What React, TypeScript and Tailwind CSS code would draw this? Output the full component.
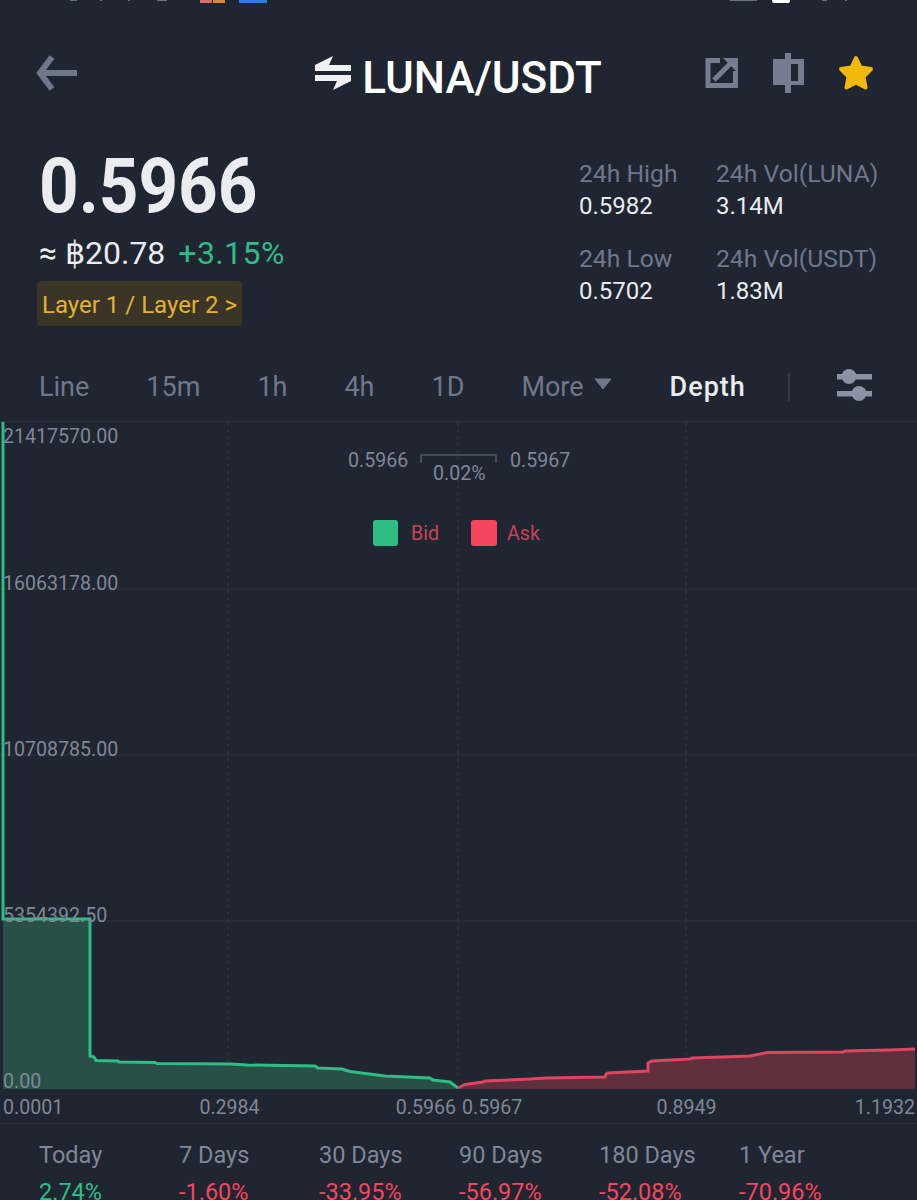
/**
 * LUNA/USDT market screen, depth tab open.
 */

const TABS = ['Line', '15m', '1h', '4h', '1D']

const STATS = [
  { label: '24h High', value: '0.5982' },
  { label: '24h Vol(LUNA)', value: '3.14M' },
  { label: '24h Low', value: '0.5702' },
  { label: '24h Vol(USDT)', value: '1.83M' },
]

const PERIODS = [
  { label: 'Today', value: '2.74%', up: true },
  { label: '7 Days', value: '-1.60%', up: false },
  { label: '30 Days', value: '-33.95%', up: false },
  { label: '90 Days', value: '-56.97%', up: false },
  { label: '180 Days', value: '-52.08%', up: false },
  { label: '1 Year', value: '-70.96%', up: false },
]

const Y_LABELS = [
  { text: '21417570.00', className: 'top-[3px]' },
  { text: '16063178.00', className: 'top-[150px]' },
  { text: '10708785.00', className: 'top-[316px]' },
  { text: '5354392.50', className: 'top-[482px]' },
  { text: '0.00', className: 'top-[648px]' },
]

// curve points, in the plot's own coordinates (y = 0 is the top of the plot)
const BID_LINE =
  '3,0 3,497 90,497 90,634 94,635 96,638.5 118,639 119,640 155,640.5 157,641.5 230,642 247,643 315,644 318,646 342,647 350,649.5 385,654 430,656 433,658 450,660 458,666'
const ASK_LINE =
  '458,666 465,662.5 483,660 485,659 530,657 545,656 605,655 606,652 608,651 648,649 648,641 652,639 690,637 692,636 750,634 765,631 767,630.5 843,630 845,629 890,628 915,627'

function HeaderIcons() {
  return (
    <div className="flex items-center justify-end gap-[34px] pr-[43px]">
      <svg width="34" height="32" viewBox="0 0 34 32" className="fill-none">
        <path d="M15 3.5H3V28.5H30.5V14" stroke="#757e8f" strokeWidth="5" />
        <path d="M9 23L26 6" stroke="#757e8f" strokeWidth="5" />
        <path d="M18 1H33V16Z" fill="#757e8f" />
      </svg>
      <svg width="31" height="40" viewBox="0 0 31 40">
        <path
          fillRule="evenodd"
          d="M12 0H18V6H31V32H18V40H12V32H0V6H12ZM18 11V28H25V11Z"
          fill="#757e8f"
        />
      </svg>
      <svg width="36" height="36" viewBox="0 0 36 36">
        <polygon
          points="18,3 22.5,12.5 33,14 25.5,21.5 27.5,32.5 18,27.5 8.5,32.5 10.5,21.5 3,14 13.5,12.5"
          fill="#f0b90b"
          stroke="#f0b90b"
          strokeWidth="4"
          strokeLinejoin="round"
        />
      </svg>
    </div>
  )
}

function DepthChart() {
  return (
    <div className="flex h-[702px] flex-col border-b border-[#2b313c]">
      <div className="relative h-[667px] text-[19.6px] text-[#7f8896]">
        <svg width="917" height="667" className="absolute inset-0">
          {[167, 333, 499].map((y) => (
            <line key={y} x1="0" x2="917" y1={y} y2={y} stroke="#2d333f" />
          ))}
          {[228, 458, 686].map((x) => (
            <line
              key={x}
              x1={x}
              x2={x}
              y1="0"
              y2="667"
              stroke="#323946"
              strokeDasharray="3 4"
            />
          ))}
          <polygon points={`3,497 ${BID_LINE.split(' ').slice(2).join(' ')} 458,667 3,667`} fill="#275147" />
          <polygon points={`${ASK_LINE} 915,667 458,667`} fill="#5f2f3e" />
          <polyline points={BID_LINE} fill="none" stroke="#2ebd85" strokeWidth="3" />
          <polyline points={ASK_LINE} fill="none" stroke="#e0455f" strokeWidth="3" />
        </svg>

        {Y_LABELS.map((l) => (
          <span key={l.text} className={`absolute left-[3px] leading-[24px] ${l.className}`}>
            {l.text}
          </span>
        ))}

        <span className="absolute left-[348px] top-[27px] leading-[24px]">0.5966</span>
        <div className="absolute left-[420px] top-[32px] h-[9px] w-[77px] rounded-t-[2px] border-x-2 border-t-2 border-[#444b58]" />
        <span className="absolute left-[433px] top-[40px] leading-[24px]">0.02%</span>
        <span className="absolute left-[510px] top-[27px] leading-[24px]">0.5967</span>

        <div className="absolute left-[373px] top-[97px] flex items-center text-[#c8415b]">
          <span className="h-[26px] w-[25px] rounded-[3px] bg-[#2ebd85]" />
          <span className="ml-[13px] mt-[3px] w-[60px] leading-[24px]">Bid</span>
          <span className="h-[26px] w-[26px] rounded-[3px] bg-[#f6465d]" />
          <span className="ml-[10px] mt-[3px] leading-[24px]">Ask</span>
        </div>
      </div>

      <div className="flex pt-[7px] text-[19.6px] leading-[24px] text-[#7f8896]">
        <div className="flex w-[456px] justify-between pl-[3px]">
          <span>0.0001</span>
          <span>0.2984</span>
          <span>0.5966</span>
        </div>
        <div className="flex flex-1 justify-between pl-[6px] pr-[2px]">
          <span>0.5967</span>
          <span className="mr-[4px]">0.8949</span>
          <span>1.1932</span>
        </div>
      </div>
    </div>
  )
}

export default function App() {
  return (
    <div className="h-[1200px] w-[917px] overflow-hidden bg-[#1f2531] font-['Roboto',sans-serif]">
      {/* what is left of the phone status bar */}
      <div className="flex h-[4px] items-start">
        <span className="ml-[70px] h-[1px] w-[7px] bg-[#6b7280]" />
        <span className="ml-[23px] h-[1px] w-[2px] bg-[#6b7280]" />
        <span className="ml-[26px] h-[1px] w-[2px] bg-[#6b7280]" />
        <span className="ml-[27px] h-[1px] w-[10px] bg-[#6b7280]" />
        <span className="ml-[33px] h-[3px] w-[12px] bg-[#d9705f]" />
        <span className="ml-[1px] h-[3px] w-[12px] bg-[#d98a35]" />
        <span className="ml-[14px] h-[3px] w-[28px] bg-[#2b7be8]" />
        <span className="ml-[463px] h-[1px] w-[27px] bg-[#6b7280]" />
        <span className="ml-[15px] h-[3px] w-[18px] rounded-b-[2px] bg-white" />
        <span className="ml-[32px] h-[1px] w-[5px] bg-[#6b7280]" />
        <span className="ml-[18px] h-[1px] w-[2px] bg-[#6b7280]" />
      </div>

      <header className="grid h-[138px] grid-cols-[1fr_auto_1fr] items-center">
        <svg width="44" height="36" viewBox="0 0 44 36" className="ml-[35px] fill-none">
          <path d="M42 18H6" stroke="#6f7889" strokeWidth="6" />
          <path d="M17 2L5 18L17 34" stroke="#6f7889" strokeWidth="6" />
        </svg>
        <div className="flex items-center gap-[11px]">
          <svg width="36" height="34" viewBox="0 0 36 34">
            <path d="M0 9L18 0L14 9H36V15H0Z" fill="#f0f1f4" />
            <path d="M36 25L18 34L22 25H0V19H36Z" fill="#f0f1f4" />
          </svg>
          <h1 className="mt-[9px] text-[44px] font-medium leading-none text-white">LUNA/USDT</h1>
        </div>
        <HeaderIcons />
      </header>

      <section className="flex h-[208px] justify-between">
        <div className="pl-[39px]">
          <div className="origin-left scale-x-[0.91] text-[76px] font-bold leading-[88px] text-[#eaecef]">0.5966</div>
          <div className="mt-[1px] flex items-center text-[32px] leading-[44px]">
            <span className="text-[#eaecef]">≈ ฿20.78</span>
            <span className="ml-[13px] tracking-[0.4px] text-[#2ebd85]">+3.15%</span>
          </div>
          <div className="-ml-[2px] mt-[6px] flex h-[45px] w-[205px] items-center justify-center rounded-[4px] bg-[#3a3527] pt-[3px] text-[24px] text-[#e3b32a]">
            Layer 1 / Layer 2 &gt;
          </div>
        </div>
        <div className="grid grid-cols-[137px_162px] content-start gap-y-[21px] pr-[39px] pt-[16px]">
          {STATS.map((s) => (
            <div key={s.label}>
              <div className="whitespace-nowrap text-[24.7px] leading-[32px] text-[#6f7889]">{s.label}</div>
              <div className="text-[24px] leading-[32px] text-[#eaecef]">{s.value}</div>
            </div>
          ))}
        </div>
      </section>

      <nav className="flex h-[72px] items-center gap-[57px] border-b border-[#2b313c] pl-[39px] pt-[3px] text-[27px] text-[#6f7889]">
        {TABS.map((t) => (
          <span key={t}>{t}</span>
        ))}
        <span className="flex items-center gap-[10px]">
          More
          <svg width="18" height="12" viewBox="0 0 18 12" className="-translate-y-[3px]">
            <path d="M1 1H17L9 11Z" fill="#6f7889" stroke="#6f7889" strokeLinejoin="round" />
          </svg>
        </span>
        <span className="ml-[1px] font-medium tracking-[1px] text-[#eaecef]">Depth</span>
        <span className="-ml-[15px] h-[28px] w-[2px] bg-[#333a46]" />
        <svg width="36" height="36" viewBox="0 0 36 36" className="-ml-[10px] -mt-[3px]">
          <rect x="0" y="6" width="35" height="5.5" fill="#8a93a3" />
          <circle cx="12" cy="8.5" r="7.5" fill="#8a93a3" />
          <rect x="0" y="23" width="35" height="5.5" fill="#8a93a3" />
          <circle cx="22" cy="25.5" r="7.5" fill="#8a93a3" />
        </svg>
      </nav>

      <DepthChart />

      <footer className="grid grid-cols-6 pl-[39px] pr-[38px] pt-[14px]">
        {PERIODS.map((p) => (
          <div key={p.label}>
            <div className="text-[23.5px] leading-[34px] text-[#7f8896]">{p.label}</div>
            <div className={`mt-[3px] text-[23.5px] leading-[34px] ${p.up ? 'text-[#2ebd85]' : 'text-[#f6465d]'}`}>
              {p.value}
            </div>
          </div>
        ))}
      </footer>
    </div>
  )
}
